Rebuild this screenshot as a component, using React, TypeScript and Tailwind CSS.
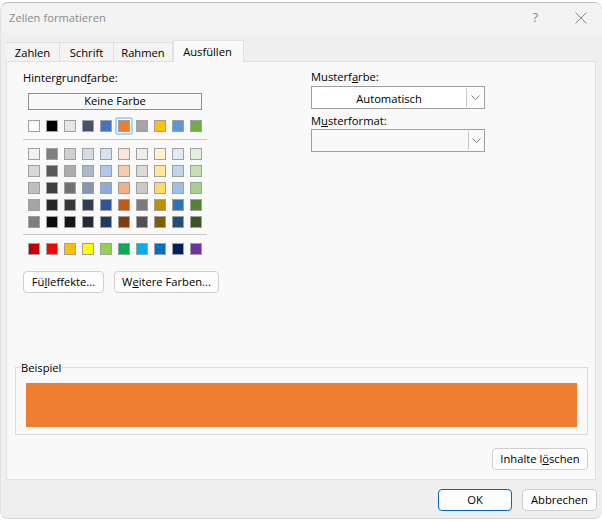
const themeRow = ["#ffffff", "#000000", "#e7e6e6", "#44546a", "#4472c4", "#ed7d31", "#a5a5a5", "#ffc000", "#5b9bd5", "#70ad47"];

const tintRows = [
  ["#f2f2f2", "#7f7f7f", "#d0cece", "#d6dce4", "#d9e2f3", "#fbe5d5", "#ededed", "#fff2cc", "#deeaf6", "#e2efd9"],
  ["#d8d8d8", "#595959", "#aeabab", "#adb9ca", "#b4c6e7", "#f7caac", "#dbdbdb", "#fee599", "#bdd6ee", "#c5e0b3"],
  ["#bfbfbf", "#3f3f3f", "#757070", "#8496b0", "#8eaadb", "#f4b083", "#c9c9c9", "#ffd965", "#9cc2e5", "#a8d08d"],
  ["#a5a5a5", "#262626", "#3a3838", "#323e4f", "#2f5496", "#c45911", "#7b7b7b", "#bf8f00", "#2e74b5", "#538135"],
  ["#7f7f7f", "#0c0c0c", "#171616", "#222a35", "#1f3864", "#833c0b", "#525252", "#7f6000", "#1f4e79", "#385623"],
];

const standardRow = ["#c00000", "#ff0000", "#ffc000", "#ffff00", "#92d050", "#00b050", "#00b0f0", "#0070c0", "#002060", "#7030a0"];

function SwatchRow({ colors, selected }: { colors: string[]; selected?: string }) {
  return (
    <div className="flex h-3 gap-[6px]">
      {colors.map((color) => (
        <div key={color} className="relative size-3 border border-[#a0a0a0]" style={{ backgroundColor: color }}>
          {color === selected && (
            <div className="absolute -inset-[4px] rounded-[3px] border-2 border-[#a8d4f5]" />
          )}
        </div>
      ))}
    </div>
  );
}

function Chevron() {
  return (
    <svg width="9" height="5" viewBox="0 0 9 5" fill="none" stroke="#707070" strokeWidth="0.9">
      <path d="M0.5 0.5 L4.5 4.5 L8.5 0.5" />
    </svg>
  );
}

function Select({ value, className, arrowWidth }: { value?: string; className: string; arrowWidth: string }) {
  return (
    <div className={`flex h-[23px] w-[174px] items-stretch border border-[#a0a0a0] ${className}`}>
      <div className="flex-1 pt-px text-center leading-[22px]">{value}</div>
      <div className={`m-[1px] ml-0 flex items-center justify-center border-l border-[#c8c8c8] bg-[#fbfbfb] ${arrowWidth}`}>
        <Chevron />
      </div>
    </div>
  );
}

function Tab({ label, width }: { label: string; width: string }) {
  return (
    <div className={`mt-[3px] h-[19px] border-t border-r border-[#e0e0e0] bg-[#f3f3f3] text-center leading-[20px] ${width}`}>
      {label}
    </div>
  );
}

function Button({ children, className }: { children: React.ReactNode; className: string }) {
  return (
    <button className={`h-[22px] rounded-[4px] border bg-[#fdfdfd] text-center leading-[20px] ${className}`}>
      {children}
    </button>
  );
}

export default function App() {
  return (
    <div className="h-[521px] w-[602px] overflow-hidden bg-white pt-[2px] text-[11.2px] text-black font-['Open_Sans','Noto_Sans',sans-serif]">
      <div className="flex h-[517px] w-[602px] flex-col rounded-[8px] border-t border-b border-l border-t-[#bdbdbd] border-b-[#d4d4d4] border-l-[#e2e2e2] bg-[#efefef]">
        <div className="flex h-[30px] items-center justify-between rounded-t-[8px] bg-[#f3f3f3] pl-[8px] pr-[15px]">
          <span className="text-[11.2px] text-[#8c8c8c]">Zellen formatieren</span>
          <div className="flex items-center gap-[37px] text-[#8c8c8c]">
            <span className="text-[13px]">?</span>
            <svg width="12" height="12" viewBox="0 0 12 12" fill="none" stroke="#7a7a7a" strokeWidth="0.9">
              <path d="M0.5 0.5 L11.5 11.5 M11.5 0.5 L0.5 11.5" />
            </svg>
          </div>
        </div>

        <div className="mt-[7px] flex h-[21px] items-end pl-[5px]">
          <Tab label="Zahlen" width="w-[54px]" />
          <Tab label="Schrift" width="w-[54px]" />
          <Tab label="Rahmen" width="w-[59px]" />
          <div className="relative z-10 -mb-[1px] h-[22px] w-[71px] border-x border-t border-[#e0e0e0] bg-[#f9f9f9] pr-[2px] text-center leading-[21px]">
            Ausfüllen
          </div>
        </div>

        <div className="ml-[5px] flex h-[419px] w-[590px] flex-col border border-[#e0e0e0] bg-[#f9f9f9] px-[8px] pt-[9px]">
          <div className="flex h-[296px]">
            <div className="flex w-[296px] flex-col">
              <div className="h-[17px] pl-[8px] leading-[14px]">
                Hintergrund<u>f</u>arbe:
              </div>
              <div className="ml-[13px] mt-[5px] h-[17px] w-[174px] border border-[#8f8f8f] text-center leading-[14px]">
                Keine Farbe
              </div>
              <div className="ml-[13px] mt-[10px]">
                <SwatchRow colors={themeRow} selected="#ed7d31" />
              </div>
              <div className="ml-[8px] mt-[7px] h-px w-[184px] bg-[#c8c8c8]" />
              <div className="ml-[13px] mt-[8px] flex flex-col gap-[5px]">
                {tintRows.map((row) => (
                  <SwatchRow key={row[0]} colors={row} />
                ))}
              </div>
              <div className="ml-[8px] mt-[6px] h-px w-[184px] bg-[#c8c8c8]" />
              <div className="ml-[13px] mt-[8px]">
                <SwatchRow colors={standardRow} />
              </div>
              <div className="ml-[8px] mt-[16px] flex gap-[10px]">
                <Button className="w-[81px] border-[#cfcfcf]">
                  Fü<u>l</u>leffekte...
                </Button>
                <Button className="w-[105px] border-[#cfcfcf]">
                  W<u>e</u>itere Farben...
                </Button>
              </div>
            </div>
            <div className="-mt-[2px] flex w-[174px] flex-col">
              <div className="h-[17px] leading-[15px]">
                Musterf<u>a</u>rbe:
              </div>
              <Select value="Automatisch" className="bg-white" arrowWidth="w-[17px]" />
              <div className="mt-[1px] h-[19px] leading-[21px]">
                M<u>u</u>sterformat:
              </div>
              <Select className="bg-[#f9f9f9]" arrowWidth="w-[15px]" />
            </div>
          </div>

          <div className="relative h-[68px] w-[573px] border border-[#dcdcdc] px-[10px] pt-[15px]">
            <span className="absolute left-[5px] top-[-7px] bg-[#f9f9f9] pr-[1px] leading-[14px]">Beispiel</span>
            <div className="h-[44px] w-[551px] bg-[#ef7d31]" />
          </div>

          <div className="mr-[-1px] mt-[13px] flex justify-end">
            <Button className="w-[96px] border-[#cfcfcf]">
              Inhalte l<u>ö</u>schen
            </Button>
          </div>
        </div>

        <div className="flex flex-1 items-start justify-end gap-[10px] pr-[5px] pt-[9px]">
          <Button className="w-[74px] border-[#0067c0]">OK</Button>
          <Button className="w-[75px] border-[#c9d0d6]">Abbrechen</Button>
        </div>
      </div>
    </div>
  );
}
